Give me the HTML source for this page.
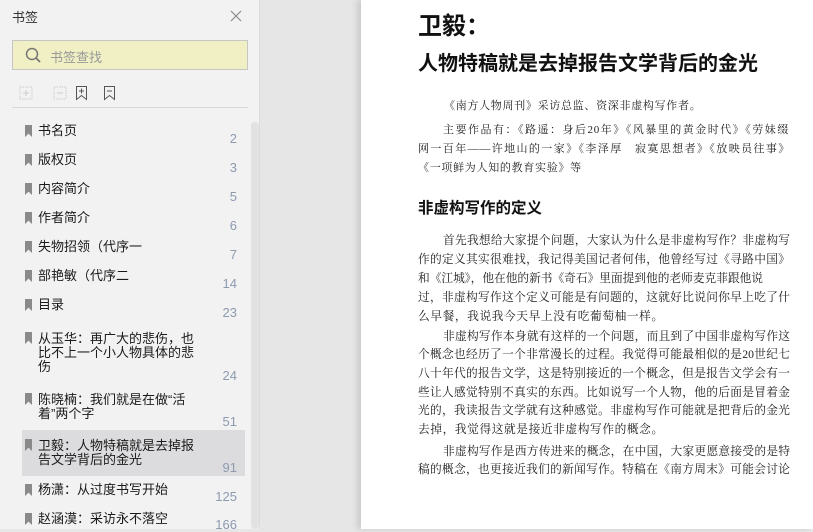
<!DOCTYPE html>
<html><head><meta charset="utf-8"><style>
*{margin:0;padding:0;box-sizing:border-box}
body{width:813px;height:529px;overflow:hidden;position:relative;background:#e6e6e6;font-family:"Liberation Sans","Noto Sans CJK SC",sans-serif}
.a{position:absolute;white-space:nowrap}
#side{position:absolute;left:0;top:0;width:260px;height:529px;background:#f2f2f2;border-right:1px solid #dcdcdc}
#page{position:absolute;left:361px;top:0;width:452px;height:529px;background:#fff;box-shadow:-4px 0 6px rgba(0,0,0,0.12)}
.t{font-size:13px;color:#1a1a1a;line-height:14px}
.n{font-size:13px;color:#8d9ab0;text-align:right;width:40px}
.bm{position:absolute;width:7px;height:12px;background:#8a8a8a;clip-path:polygon(0 0,100% 0,100% 100%,50% 72%,0 100%)}
.serif{font-family:"Liberation Serif","Noto Serif CJK SC",serif;color:#222}
.ln{position:absolute;left:418px;width:372px;font-size:11.7px;text-align:justify;text-align-last:justify;white-space:nowrap;line-height:15px;overflow:visible}
.ln.e{text-align-last:left;letter-spacing:0.6px}
.sm{position:absolute;font-size:11px;line-height:13px;white-space:nowrap;letter-spacing:0.7px}
</style></head><body>
<div id="side">
<div class="a" style="left:12px;top:7px;font-size:13px;color:#333">书签</div>
<svg class="a" style="left:230px;top:10px" width="12" height="12"><path d="M1 1L11 11M11 1L1 11" stroke="#888" stroke-width="1.2"/></svg>
<div class="a" style="left:12px;top:40px;width:236px;height:30px;background:#f0f0c4;border:1px solid #c6c6c6"></div>
<svg class="a" style="left:25px;top:47px" width="18" height="16"><circle cx="7" cy="7" r="5.5" fill="none" stroke="#777" stroke-width="1.5"/><path d="M11 11L15 15" stroke="#777" stroke-width="1.8"/></svg>
<div class="a" style="left:50px;top:47px;font-size:13px;color:#999">书签查找</div>
<svg class="a" style="left:18px;top:85px" width="100" height="16">
<g stroke="#ccc" fill="none" stroke-dasharray="1.5 1"><rect x="2" y="2" width="12" height="12"/><rect x="36" y="2" width="12" height="12"/></g>
<path d="M8 5V11M5 8H11M39 8H45" stroke="#ccc"/>
<path d="M58.5 1.5H68.5V14.5L63.5 10.5L58.5 14.5Z" fill="none" stroke="#555"/><path d="M63.5 3.5V8.5M61 6H66" stroke="#555"/>
<path d="M86.5 1.5H96.5V14.5L91.5 10.5L86.5 14.5Z" fill="none" stroke="#555"/><path d="M89 6H94" stroke="#555"/>
</svg>
<div class="a" style="left:12px;top:107px;width:236px;height:1px;background:#d8d8d8"></div>
<div class="a" style="left:251px;top:122px;width:8px;height:407px;background:#e2e2e2;border-radius:4px"></div>
<div class="a" style="left:22px;top:430px;width:223px;height:46px;background:#dcdcde"></div>

<div class="bm" style="left:25px;top:125px"></div><div class="a t" style="left:38px;top:124px">书名页</div><div class="a n" style="left:197px;top:131px">2</div>
<div class="bm" style="left:25px;top:154px"></div><div class="a t" style="left:38px;top:153px">版权页</div><div class="a n" style="left:197px;top:160px">3</div>
<div class="bm" style="left:25px;top:183px"></div><div class="a t" style="left:38px;top:182px">内容简介</div><div class="a n" style="left:197px;top:189px">5</div>
<div class="bm" style="left:25px;top:212px"></div><div class="a t" style="left:38px;top:211px">作者简介</div><div class="a n" style="left:197px;top:218px">6</div>
<div class="bm" style="left:25px;top:241px"></div><div class="a t" style="left:38px;top:240px">失物招领（代序一</div><div class="a n" style="left:197px;top:247px">7</div>
<div class="bm" style="left:25px;top:270px"></div><div class="a t" style="left:38px;top:269px">部艳敏（代序二</div><div class="a n" style="left:197px;top:276px">14</div>
<div class="bm" style="left:25px;top:299px"></div><div class="a t" style="left:38px;top:298px">目录</div><div class="a n" style="left:197px;top:305px">23</div>
<div class="bm" style="left:25px;top:332px"></div><div class="a t" style="left:38px;top:332px">从玉华：再广大的悲伤，也<br>比不上一个小人物具体的悲<br>伤</div><div class="a n" style="left:197px;top:368px">24</div>
<div class="bm" style="left:25px;top:393px"></div><div class="a t" style="left:38px;top:393px">陈晓楠：我们就是在做“活<br>着”两个字</div><div class="a n" style="left:197px;top:414px">51</div>
<div class="bm" style="left:25px;top:439px"></div><div class="a t" style="left:38px;top:439px">卫毅：人物特稿就是去掉报<br>告文学背后的金光</div><div class="a n" style="left:197px;top:460px">91</div>
<div class="bm" style="left:25px;top:484px"></div><div class="a t" style="left:38px;top:483px">杨潇：从过度书写开始</div><div class="a n" style="left:197px;top:489px">125</div>
<div class="bm" style="left:25px;top:513px"></div><div class="a t" style="left:38px;top:512px">赵涵漠：采访永不落空</div><div class="a n" style="left:197px;top:517px">166</div>
</div>
<div id="page"></div>
<div class="a" style="left:418px;top:6px;font-size:24px;font-weight:bold;color:#111">卫毅：</div>
<div class="a" style="left:418px;top:47px;font-size:20px;font-weight:bold;color:#111">人物特稿就是去掉报告文学背后的金光</div>
<div class="sm serif" style="left:444px;top:100px">《南方人物周刊》采访总监、资深非虚构写作者。</div>
<div class="sm serif" style="left:443px;top:124px;width:346px;text-align:justify;text-align-last:justify">主要作品有：《路遥：身后20年》《风暴里的黄金时代》《劳妹缀</div>
<div class="sm serif" style="left:418px;top:143px;width:372px;text-align:justify;text-align-last:justify">网一百年——许地山的一家》《李泽厚　寂寞思想者》《放映员往事》</div>
<div class="sm serif" style="left:418px;top:162px">《一项鲜为人知的教育实验》等</div>
<div class="a" style="left:418px;top:196px;font-size:15.5px;font-weight:bold;color:#111">非虚构写作的定义</div>
<div class="serif">
<div class="ln" style="top:233px;left:443px;width:347px">首先我想给大家提个问题，大家认为什么是非虚构写作？非虚构写</div>
<div class="ln" style="top:252px">作的定义其实很难找，我记得美国记者何伟，他曾经写过《寻路中国》</div>
<div class="ln" style="top:271px;width:345px">和《江城》，他在他的新书《奇石》里面提到他的老师麦克菲跟他说</div>
<div class="ln" style="top:290px">过，非虚构写作这个定义可能是有问题的，这就好比说问你早上吃了什</div>
<div class="ln e" style="top:309px">么早餐，我说我今天早上没有吃葡萄柚一样。</div>
<div class="ln" style="top:329px;left:443px;width:347px">非虚构写作本身就有这样的一个问题，而且到了中国非虚构写作这</div>
<div class="ln" style="top:347px">个概念也经历了一个非常漫长的过程。我觉得可能最相似的是20世纪七</div>
<div class="ln" style="top:366px">八十年代的报告文学，这是特别接近的一个概念，但是报告文学会有一</div>
<div class="ln" style="top:385px">些让人感觉特别不真实的东西。比如说写一个人物，他的后面是冒着金</div>
<div class="ln" style="top:403px">光的，我读报告文学就有这种感觉。非虚构写作可能就是把背后的金光</div>
<div class="ln e" style="top:422px">去掉，我觉得这就是接近非虚构写作的概念。</div>
<div class="ln" style="top:444px;left:443px;width:347px">非虚构写作是西方传进来的概念，在中国，大家更愿意接受的是特</div>
<div class="ln" style="top:462px">稿的概念，也更接近我们的新闻写作。特稿在《南方周末》可能会讨论</div>
</div>
</body></html>
